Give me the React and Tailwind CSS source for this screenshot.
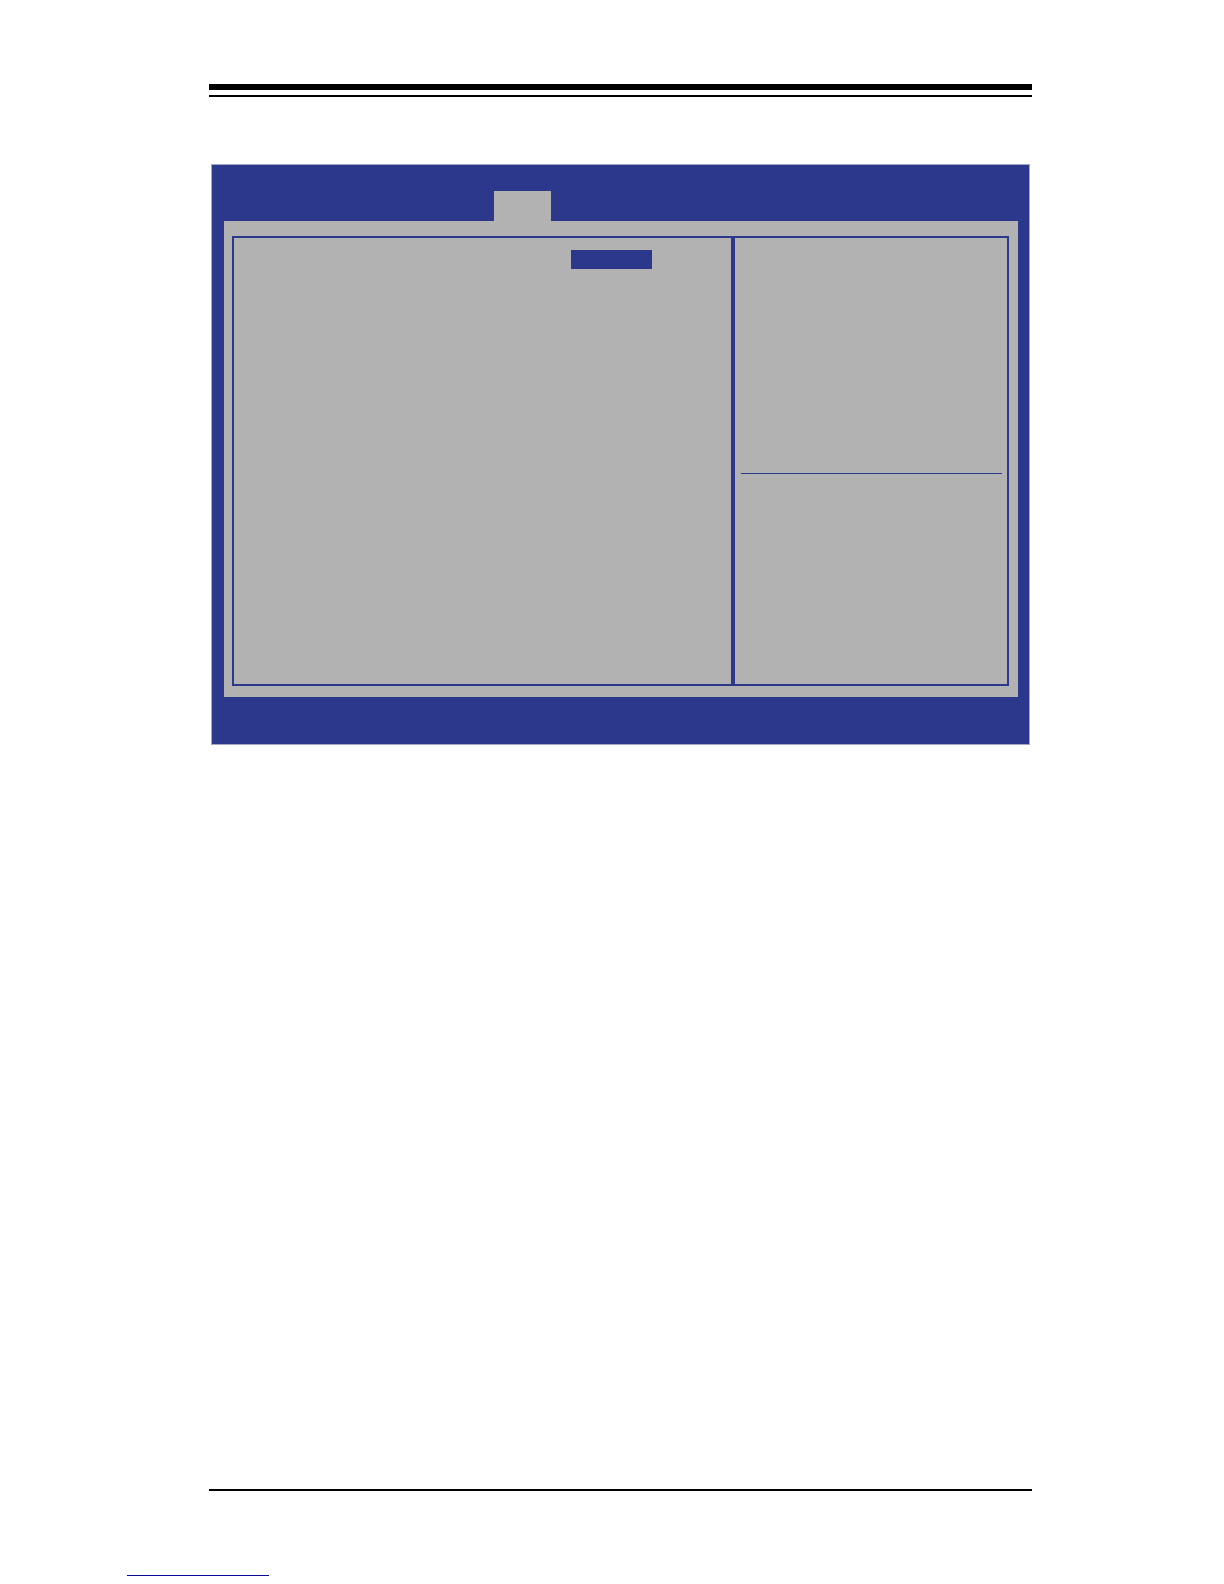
function ActiveTab() {
  return <div className="ml-[270px] h-[30px] w-[57px] bg-[#b2b2b2]" />
}

function SettingsPane() {
  return (
    <section className="min-w-0 flex-1 pt-3">
      <div className="ml-[337px] h-[19px] w-[81px] bg-[#2b388c]" />
    </section>
  )
}

function HelpPane() {
  return (
    <aside className="w-[276px] shrink-0 border-l-4 border-[#2b388c] pl-[6px] pr-[5px]">
      <div className="h-[236px] border-b border-[#2b388c]" />
      <div className="h-[210px]" />
    </aside>
  )
}

function SetupScreen() {
  return (
    <div className="mx-[2px] border border-[#a3a8c8] bg-[#2b388c] pt-[26px] pr-[11px] pb-[47px] pl-3">
      <ActiveTab />
      <div className="bg-[#b2b2b2] pt-[15px] pr-[9px] pb-[11px] pl-2">
        <div className="flex border-2 border-[#2b388c]">
          <SettingsPane />
          <HelpPane />
        </div>
      </div>
    </div>
  )
}

export default function App() {
  return (
    <div className="flex min-h-screen flex-col bg-white">
      <header className="mt-[84px] mr-[192px] ml-[209px]">
        <hr className="border-t-[6px] border-black" />
        <hr className="mt-[5px] border-t-2 border-black" />
      </header>

      <main className="mt-[67px] mr-[192px] ml-[209px] flex-1">
        <SetupScreen />
      </main>

      <footer className="pb-2">
        <hr className="mr-[192px] ml-[209px] border-t-2 border-black" />
        <div className="mt-[84px] ml-[127px] h-px w-[142px] bg-[#0a0a96]" />
      </footer>
    </div>
  )
}
